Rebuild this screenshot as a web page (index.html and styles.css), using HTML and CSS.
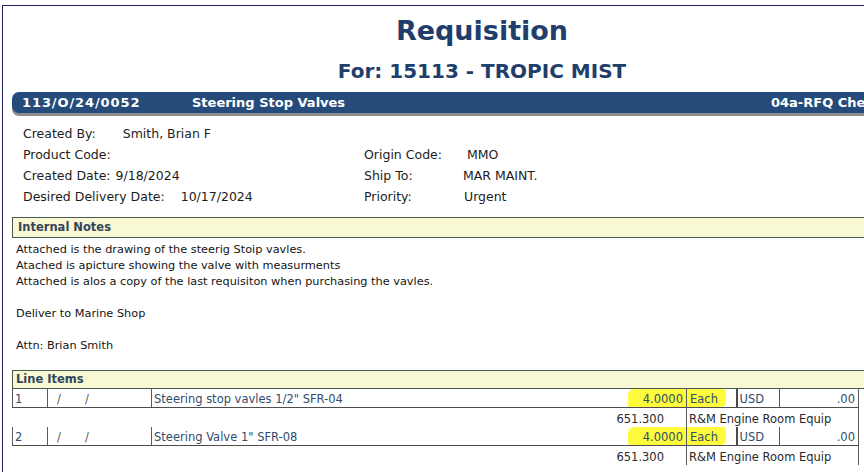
FILE: index.html
```html
<!DOCTYPE html>
<html>
<head>
<meta charset="utf-8">
<title>Requisition</title>
<link rel="stylesheet" href="styles.css">
</head>
<body>
<div class="page">
  <h1 class="title">Requisition</h1>
  <h2 class="subtitle">For: 15113 - TROPIC MIST</h2>

  <div class="bar">
    <span class="bar-num">113/O/24/0052</span>
    <span class="bar-desc">Steering Stop Valves</span>
    <span class="bar-status">04a-RFQ Checked</span>
  </div>

  <div class="info">
    <div class="cell"><span>Created By:</span><span class="val val-by">Smith, Brian F</span></div>
    <div class="cell"></div>
    <div class="cell"><span>Product Code:</span></div>
    <div class="cell"><span class="rlabel">Origin Code:</span><span class="rval rval-mmo">MMO</span></div>
    <div class="cell"><span>Created Date:</span><span class="val val-date">9/18/2024</span></div>
    <div class="cell"><span class="rlabel">Ship To:</span><span class="rval rval-ship">MAR MAINT.</span></div>
    <div class="cell"><span>Desired Delivery Date:</span><span class="val val-desired">10/17/2024</span></div>
    <div class="cell"><span class="rlabel">Priority:</span><span class="rval">Urgent</span></div>
  </div>

  <div class="section-head notes-head">Internal Notes</div>
  <div class="notes">
    <p>Attached is the drawing of the steerig Stoip vavles.<br>Atached is apicture showing the valve with measurments<br>Attached is alos a copy of the last requisiton when purchasing the vavles.</p>
    <p>Deliver to Marine Shop</p>
    <p>Attn: Brian Smith</p>
  </div>

  <div class="section-head items-head">Line Items</div>
  <table class="items">
    <colgroup>
      <col class="c-no"><col class="c-date"><col class="c-desc"><col class="c-qty"><col class="c-uom"><col class="c-cur"><col class="c-amt">
    </colgroup>
    <tr class="main">
      <td class="no">1</td>
      <td class="date"><span class="slash">/</span><span class="slash">/</span></td>
      <td class="desc">Steering stop vavles 1/2" SFR-04</td>
      <td class="qty"><span class="hl hl-qty">4.0000</span></td>
      <td class="uom"><span class="hl hl-uom">Each</span></td>
      <td class="cur">USD</td>
      <td class="amt">.00</td>
    </tr>
    <tr class="sub">
      <td colspan="3"></td>
      <td class="acct">651.300</td>
      <td class="acct-name" colspan="3">R&amp;M Engine Room Equip</td>
    </tr>
    <tr class="main">
      <td class="no">2</td>
      <td class="date"><span class="slash">/</span><span class="slash">/</span></td>
      <td class="desc">Steering Valve 1" SFR-08</td>
      <td class="qty"><span class="hl hl-qty">4.0000</span></td>
      <td class="uom"><span class="hl hl-uom">Each</span></td>
      <td class="cur">USD</td>
      <td class="amt">.00</td>
    </tr>
    <tr class="sub">
      <td colspan="3"></td>
      <td class="acct">651.300</td>
      <td class="acct-name" colspan="3">R&amp;M Engine Room Equip</td>
    </tr>
  </table>
</div>
</body>
</html>
```

FILE: styles.css
```css
html, body {
  margin: 0;
  padding: 0;
  overflow: hidden;
  background: #ffffff;
}

body {
  width: 864px;
  height: 472px;
  font-family: "DejaVu Sans", Verdana, sans-serif;
  color: #1c1c1c;
}

.page {
  width: 940px;
  height: 480px;
  margin: 5px 0 0 2px;
  padding: 9px 9px 0 9px;
  border-top: 1px solid #24235a;
  border-left: 1px solid #24235a;
}

.title {
  margin: 0;
  font-size: 27px;
  line-height: 32px;
  font-weight: bold;
  text-align: center;
  color: #1f3e6c;
}

.subtitle {
  margin: 12px 0 0 0;
  font-size: 20px;
  line-height: 24px;
  font-weight: bold;
  text-align: center;
  color: #1f3e6c;
}

.bar {
  margin-top: 9px;
  height: 21px;
  display: grid;
  grid-template-columns: 170px 579px auto;
  padding-left: 10px;
  background: #254b7b;
  border-radius: 7px 0 0 7px;
  box-shadow: 0 3px 0 #8c8c8c;
  color: #ffffff;
  font-size: 13px;
  line-height: 21px;
  font-weight: bold;
  white-space: nowrap;
}

.bar-num {
  letter-spacing: 0.9px;
}

.info {
  margin: 10px 0 0 11px;
  display: grid;
  grid-template-columns: 341px auto;
  grid-auto-rows: 21px;
  font-size: 12.5px;
  line-height: 21px;
  color: #1c1c1c;
}

.cell {
  display: flex;
  white-space: nowrap;
}

.val-by { margin-left: 27px; }
.val-date { margin-left: 5px; }
.val-desired { margin-left: 16px; }

.rlabel {
  width: 100px;
}

.rval-mmo { margin-left: 3px; }
.rval-ship { margin-left: -1px; }

.section-head {
  height: 19px;
  padding-left: 5px;
  background: #f8f8d3;
  border: 1px solid #4a5a4e;
  border-right: none;
  font-size: 11.5px;
  line-height: 19px;
  font-weight: bold;
  color: #33465b;
}

.notes-head {
  margin-top: 10px;
}

.notes {
  padding: 4px 0 16px 4px;
  font-size: 11.3px;
  line-height: 16px;
  color: #141414;
}

.notes p {
  margin: 0 0 16px 0;
}

.notes p:last-child {
  margin-bottom: 0;
}

.items-head {
  height: 17px;
  line-height: 17px;
  padding-left: 3px;
}

.items {
  border-collapse: collapse;
  table-layout: fixed;
  width: 846px;
  font-size: 11.5px;
  color: #2f4d6c;
}

.c-no { width: 35px; }
.c-date { width: 104px; }
.c-desc { width: 380px; }
.c-qty { width: 155px; }
.c-uom { width: 50px; }
.c-cur { width: 43px; }
.c-amt { width: 79px; }

.items td {
  padding: 0;
  white-space: nowrap;
  overflow: hidden;
}

.main td {
  height: 16px;
  padding-top: 2px;
  line-height: 16px;
  border-bottom: 1px solid #4c4c4c;
  vertical-align: top;
}

.main .no {
  padding-left: 2px;
  border-left: 1px solid #5a5a5a;
}

.main .date {
  padding-left: 9px;
  border-left: 1px solid #5a5a5a;
  color: #555;
}

.slash {
  display: inline-block;
  width: 28px;
}

.main .desc {
  padding-left: 2px;
  border-left: 1px solid #5a5a5a;
}

.main .qty {
  text-align: right;
}

.main .qty,
.main .uom {
  height: 18px;
  padding-top: 0;
  line-height: 18px;
}

.main .uom {
  border-left: 1px solid #5a5a5a;
}

.main .cur {
  padding-left: 2px;
  border-left: 2px solid #4a4a4a;
}

.main .amt {
  text-align: right;
  padding-right: 3px;
  border-left: 1px solid #5a5a5a;
  border-right: 1px solid #5a5a5a;
}

.hl {
  display: inline-block;
  box-sizing: border-box;
  height: 18px;
  padding-top: 2px;
  line-height: 16px;
  vertical-align: top;
  background: #fdfb3c;
}

.hl-qty {
  padding-left: 15px;
  padding-right: 3px;
  border-radius: 6px 0 0 2px;
}

.hl-uom {
  padding-left: 3px;
  width: 39px;
  border-radius: 0 3px 5px 0;
}

.sub td {
  height: 16px;
  padding-top: 3px;
  line-height: 16px;
  vertical-align: top;
  color: #2a2a2a;
}

.sub .acct {
  text-align: right;
  padding-right: 22px;
}

.sub .acct-name {
  padding-left: 2px;
  border-left: 1px solid #5a5a5a;
  border-right: 1px solid #5a5a5a;
}
```
